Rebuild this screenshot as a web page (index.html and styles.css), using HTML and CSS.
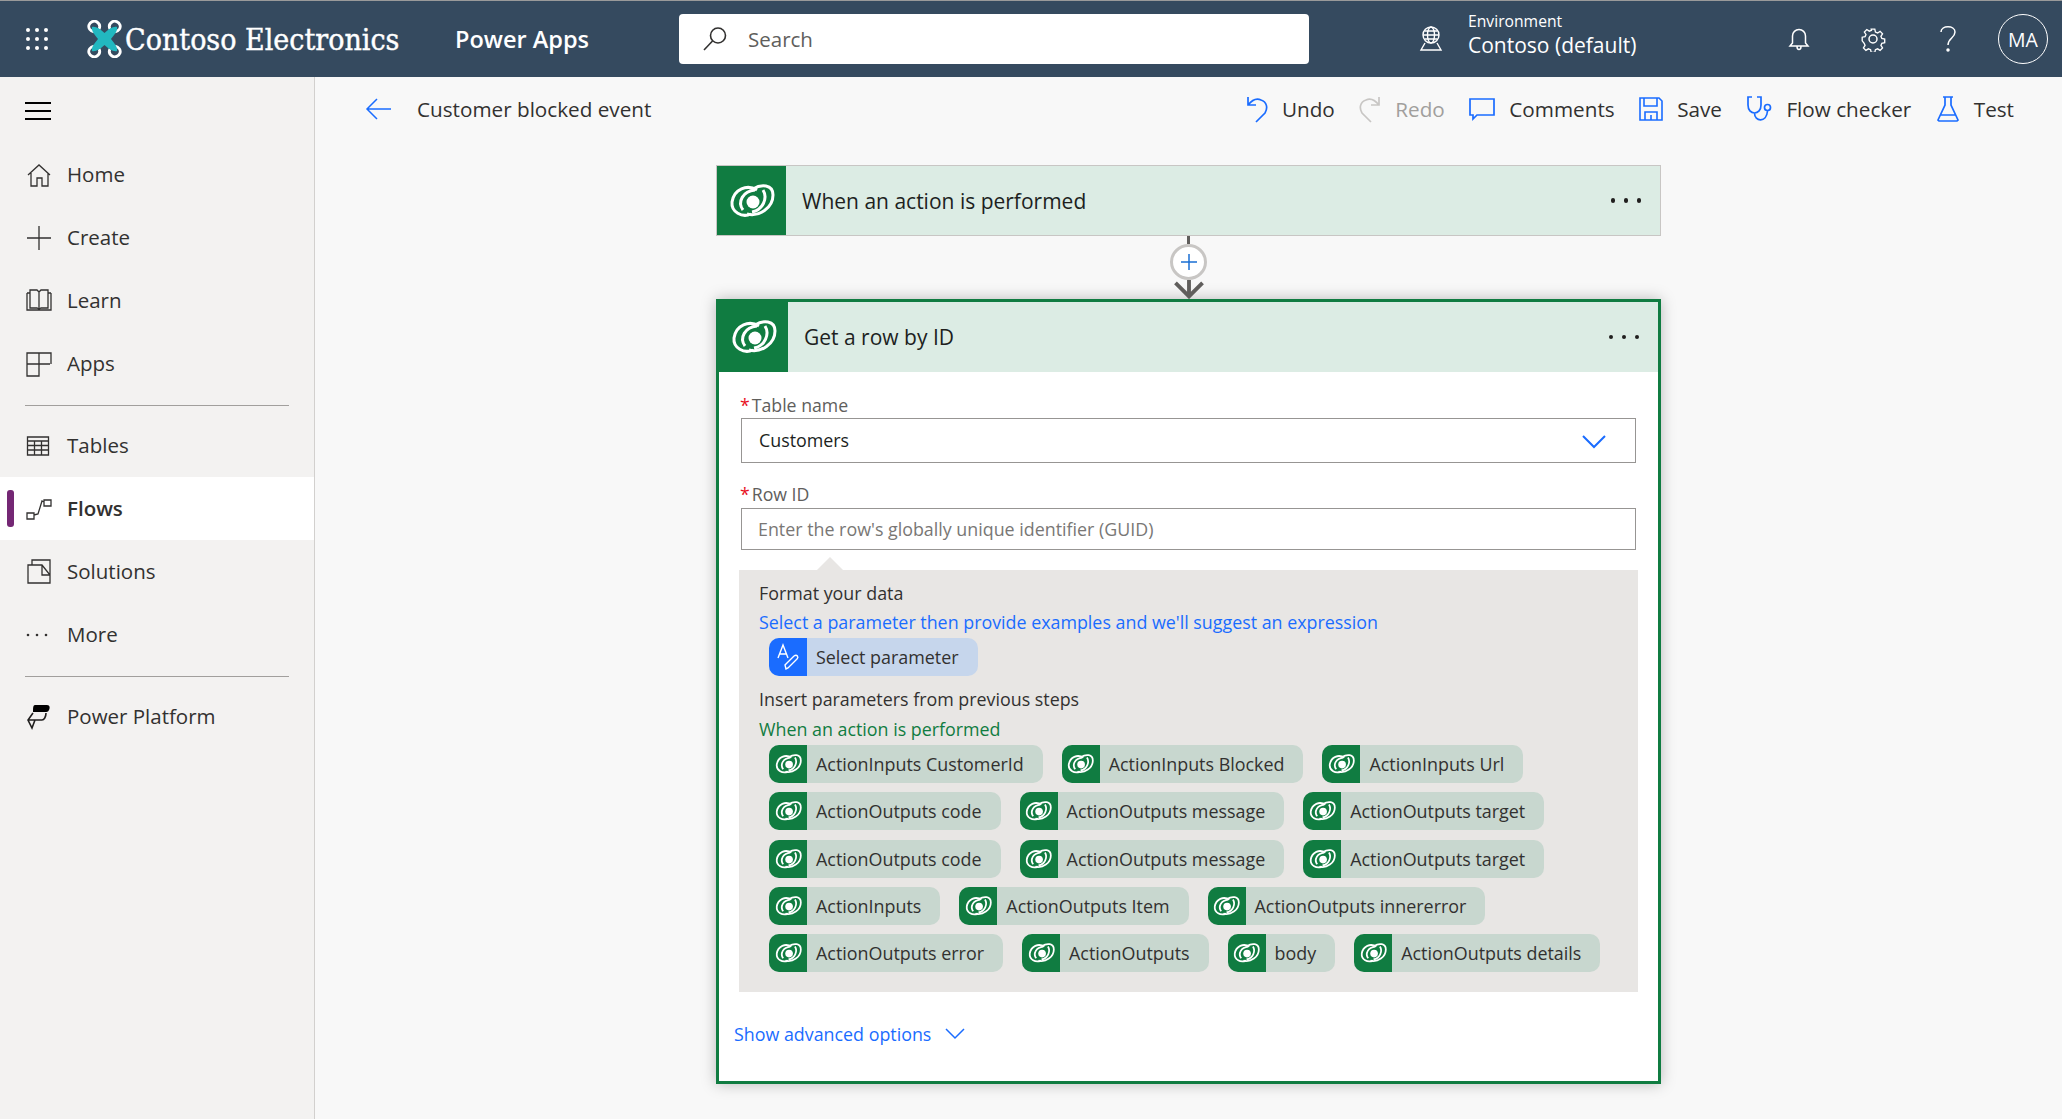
FILE: index.html
```html
<!DOCTYPE html>
<html lang="en">
<head>
<meta charset="utf-8">
<title>Customer blocked event</title>
<link rel="stylesheet" href="styles.css">
</head>
<body>
<svg class="defs" width="0" height="0" aria-hidden="true">
  <symbol id="dv" viewBox="8 12 46 36">
    <g fill="none" stroke="currentColor" stroke-width="3">
      <path d="M36 19C26 13 13 18 11 31c-1 10 10 16 19 12"/>
      <path d="M32 18c8-5 20-5 20 6 0 13-14 22-26 19"/>
      <path d="M22 39c-6-8 0-19 12-20"/>
      <path d="M42 19c5 8 0 20-11 22"/>
    </g>
    <circle cx="32" cy="31" r="6.500" fill="currentColor"/>
  </symbol>
</svg>
<header class="topbar">
  <svg class="waffle" width="24" height="24" viewBox="0 0 24 24" fill="#fff"><circle cx="3" cy="3" r="2"/><circle cx="12" cy="3" r="2"/><circle cx="21" cy="3" r="2"/><circle cx="3" cy="12" r="2"/><circle cx="12" cy="12" r="2"/><circle cx="21" cy="12" r="2"/><circle cx="3" cy="21" r="2"/><circle cx="12" cy="21" r="2"/><circle cx="21" cy="21" r="2"/></svg>
  <svg class="logo" width="35" height="38" viewBox="0 0 35 38">
    <path d="M7 12C3 11 1 8 2 5 3 2 7 0 10 2c3 2 3 5 2 7M28 12c4-1 6-4 5-7-1-3-5-5-8-3-3 2-3 5-2 7M7 26c-4 1-6 4-5 7 1 3 5 5 8 3 3-2 3-5 2-7M28 26c4 1 6 4 5 7-1 3-5 5-8 3-3-2-3-5-2-7" fill="none" stroke="#fff" stroke-width="2.800"/>
    <path d="M5 7c4-1 8 2 12.500 6C22 9 26 6 30 7c1 4-3 8-6 12 3 4 7 8 6 12-4 1-8-2-12.500-6C13 29 9 32 5 31c-1-4 3-8 6-12-3-4-7-8-6-12z" fill="#22b8c0"/>
  </svg>
  <span class="brand">Contoso Electronics</span>
  <span class="product">Power Apps</span>
  <div class="search">
    <svg width="28" height="28" viewBox="0 0 28 28" fill="none" stroke="#323130" stroke-width="1.600"><circle cx="17" cy="10.500" r="7.500"/><path d="M11.500 16L3 25"/></svg>
    <span>Search</span>
  </div>
  <div class="env">
    <svg width="28" height="28" viewBox="0 0 28 28" fill="none" stroke="#fff" stroke-width="1.400"><circle cx="14" cy="10" r="8"/><ellipse cx="14" cy="10" rx="3.500" ry="8"/><path d="M6 10h16M7.500 6h13M7.500 14h13M8 18l-4 7h20l-4-7"/></svg>
    <div class="env-text"><span class="env-label">Environment</span><span class="env-name">Contoso (default)</span></div>
  </div>
  <div class="top-icons">
    <svg width="24" height="26" viewBox="0 0 24 26" fill="none" stroke="#fff" stroke-width="1.500"><path d="M3 20h18l-2.500-3V10a6.500 6.500 0 0 0-13 0v7zM10 20.500c0 4 4 4 4 0"/></svg>
    <svg width="26" height="26" viewBox="0 0 26 26" fill="none" stroke="#fff" stroke-width="1.500"><circle cx="13" cy="13" r="4"/><path d="M11 2h4l.7 3.300 2.400 1 2.800-1.800 2.700 2.800-1.800 2.800 1 2.300 3.200.7v4l-3.200.7-1 2.400 1.800 2.800-2.700 2.700-2.800-1.800-2.400 1-.7 3.100h-4l-.7-3.100-2.400-1-2.800 1.800-2.700-2.700 1.800-2.800-1-2.400L1 15v-4l3.200-.7 1-2.300L3.400 5.300l2.700-2.800 2.800 1.800 2.400-1z" transform="translate(1.300 1.300) scale(.9)"/></svg>
    <svg class="help" width="22" height="28" viewBox="0 0 22 28" fill="none" stroke="#fff" stroke-width="1.500"><path d="M4 7c0-7 14-7 14 0 0 6-7 6-7 13"/><circle cx="11" cy="25" r="1" fill="#fff"/></svg>
    <span class="avatar">MA</span>
  </div>
</header>
<div class="main">
  <nav class="sidebar">
    <div class="menu-btn"><svg width="26" height="20" viewBox="0 0 26 20" stroke="#000" stroke-width="2"><path d="M0 2h26M0 10h26M0 18h26"/></svg></div>
    <a class="nav-item"><svg class="nav-icon" viewBox="0 0 26 26" fill="none" stroke="#323130" stroke-width="1.300"><path d="M2 13L13 3l11 10M5 11v13h6v-8h5v8h6V11"/></svg><span>Home</span></a>
    <a class="nav-item"><svg class="nav-icon" viewBox="0 0 26 26" fill="none" stroke="#323130" stroke-width="1.300"><path d="M13 1v24M1 13h24"/></svg><span>Create</span></a>
    <a class="nav-item"><svg class="nav-icon" viewBox="0 0 26 26" fill="none" stroke="#323130" stroke-width="1.300"><path d="M1 5h3M22 5h3M1 5v17h24V5M4 2h7l2 2 2-2h7v18h-7l-2 1-2-1H4zM13 4v17"/></svg><span>Learn</span></a>
    <a class="nav-item"><svg class="nav-icon" viewBox="0 0 26 26" fill="none" stroke="#323130" stroke-width="1.300"><path d="M1 2h12v23H1zM1 13h23M13 2h12v11"/></svg><span>Apps</span></a>
    <div class="nav-sep"></div>
    <a class="nav-item"><svg class="nav-icon" viewBox="0 0 26 26" fill="none" stroke="#323130" stroke-width="1.300"><path d="M1.500 4h21v18h-21zM1.500 8h21M1.500 12.500h21M1.500 17h21M8.500 8v14M15.500 8v14"/></svg><span>Tables</span></a>
    <a class="nav-item active"><svg class="nav-icon" viewBox="0 0 26 26" fill="none" stroke="#323130" stroke-width="1.300"><path d="M1 17h7v6H1zM18 4h7v6h-7zM8 19l4-1 4-13 2 1"/></svg><span>Flows</span></a>
    <a class="nav-item"><svg class="nav-icon" viewBox="0 0 26 26" fill="none" stroke="#323130" stroke-width="1.300"><path d="M2 6h14l8 10v8H2zM6 6V1h18v23M16 6v10h8"/></svg><span>Solutions</span></a>
    <a class="nav-item"><svg class="nav-icon" viewBox="0 0 26 26" fill="#323130"><circle cx="2" cy="13" r="1.300"/><circle cx="11" cy="13" r="1.300"/><circle cx="20" cy="13" r="1.300"/></svg><span>More</span></a>
    <div class="nav-sep"></div>
    <a class="nav-item"><svg class="nav-icon" viewBox="0 0 26 26"><path d="M9 1h12c3 0 3 3 2 5-1 2-2 2-4 2H7c0-4 0-7 2-7z" fill="#000"/><path d="M7 9L2 16l4 8 3-8h7c2 0 4-3 4-7M2 16h7" fill="none" stroke="#201f1e" stroke-width="1.600"/></svg><span>Power Platform</span></a>
  </nav>
  <div class="content">
    <div class="toolbar">
      <svg class="back" width="26" height="24" viewBox="0 0 26 24" fill="none" stroke="#1a6cff" stroke-width="1.500"><path d="M12 2L2 12l10 10M2 12h24"/></svg>
      <span class="flow-name">Customer blocked event</span>
      <div class="actions">
        <span class="action"><svg width="22" height="28" viewBox="0 0 22 28" fill="none" stroke="#1a6cff" stroke-width="1.700"><path d="M2 2v8h8M2 10C6 5 11 3 15 5c6 2 7 8 4 13l-9 9"/></svg>Undo</span>
        <span class="action off"><svg width="22" height="28" viewBox="0 0 22 28" fill="none" stroke="#c8c6c4" stroke-width="1.700"><path d="M20 2v8h-8M20 10C16 5 11 3 7 5 1 7 0 13 3 18l9 9"/></svg>Redo</span>
        <span class="action"><svg width="26" height="26" viewBox="0 0 26 26" fill="none" stroke="#1a6cff" stroke-width="1.700"><path d="M1 3h24v16H8l-4 4v-4H1z"/></svg>Comments</span>
        <span class="action"><svg width="24" height="26" viewBox="0 0 24 26" fill="none" stroke="#1a6cff" stroke-width="1.600"><path d="M1 2h19l3 3v19H1zM5 2v8h13V2M6 24v-8h12v8M12 19v5"/></svg>Save</span>
        <span class="action"><svg width="26" height="28" viewBox="0 0 26 28" fill="none" stroke="#1a6cff" stroke-width="1.700"><path d="M6 2H2v8c0 5 3 8 6.500 8S15 15 15 10V2h-4M8.500 18c0 9 12 10 13-2"/><circle cx="21.500" cy="12.500" r="3"/></svg>Flow checker</span>
        <span class="action"><svg width="24" height="28" viewBox="0 0 24 28" fill="none" stroke="#1a6cff" stroke-width="1.700"><path d="M7 2h10M9 2v8L2 25l1 1h18l1-1-7-15V2M5 20h14"/></svg>Test</span>
      </div>
    </div>
    <div class="canvas">
      <section class="card-head trigger">
        <div class="head-icon"><svg class="dv-lg"><use href="#dv"/></svg></div>
        <span class="head-title">When an action is performed</span>
        <span class="dots"><i></i><i></i><i></i></span>
      </section>
      <div class="connector">
        <span class="stem"></span>
        <span class="plus"><svg width="16" height="16" viewBox="0 0 16 16" stroke="#1a6fd4" stroke-width="1.500"><path d="M8 0v16M0 8h16"/></svg></span>
        <svg class="arrow" width="32" height="20" viewBox="0 0 32 20" fill="none" stroke="#605e5c" stroke-width="4"><path d="M16 0v16M2 3l14 14L30 3"/></svg>
      </div>
      <section class="card">
        <div class="card-head open">
          <div class="head-icon wide"><svg class="dv-lg"><use href="#dv"/></svg></div>
          <span class="head-title">Get a row by ID</span>
          <span class="dots"><i></i><i></i><i></i></span>
        </div>
        <div class="card-body">
          <label class="field-label first"><b>*</b>Table name</label>
          <div class="select"><span>Customers</span><svg width="26" height="16" viewBox="0 0 26 16" fill="none" stroke="#1a6cff" stroke-width="2"><path d="M2 2l11 11L24 2"/></svg></div>
          <label class="field-label second"><b>*</b>Row ID</label>
          <div class="input">Enter the row's globally unique identifier (GUID)</div>
          <div class="panel">
            <p class="p-head">Format your data</p>
            <p class="p-link">Select a parameter then provide examples and we'll suggest an expression</p>
            <div class="chip blue">
              <span class="chip-icon"><svg width="26" height="28" viewBox="0 0 26 28" fill="none" stroke="#fff" stroke-width="1.400"><path d="M3 15L8 2l5 13M5 11h6M11 26l-1-4 9-9c3-2 5 1 3 3l-9 9z"/></svg></span>
              <span class="chip-text">Select parameter</span>
            </div>
            <p class="p-head insert">Insert parameters from previous steps</p>
            <p class="p-green">When an action is performed</p>
            <div class="chips">
              <div class="chip"><span class="chip-icon"><svg class="dv-sm"><use href="#dv"/></svg></span><span class="chip-text">ActionInputs CustomerId</span></div>
              <div class="chip"><span class="chip-icon"><svg class="dv-sm"><use href="#dv"/></svg></span><span class="chip-text">ActionInputs Blocked</span></div>
              <div class="chip"><span class="chip-icon"><svg class="dv-sm"><use href="#dv"/></svg></span><span class="chip-text">ActionInputs Url</span></div>
            </div>
            <div class="chips">
              <div class="chip"><span class="chip-icon"><svg class="dv-sm"><use href="#dv"/></svg></span><span class="chip-text">ActionOutputs code</span></div>
              <div class="chip"><span class="chip-icon"><svg class="dv-sm"><use href="#dv"/></svg></span><span class="chip-text">ActionOutputs message</span></div>
              <div class="chip"><span class="chip-icon"><svg class="dv-sm"><use href="#dv"/></svg></span><span class="chip-text">ActionOutputs target</span></div>
            </div>
            <div class="chips">
              <div class="chip"><span class="chip-icon"><svg class="dv-sm"><use href="#dv"/></svg></span><span class="chip-text">ActionOutputs code</span></div>
              <div class="chip"><span class="chip-icon"><svg class="dv-sm"><use href="#dv"/></svg></span><span class="chip-text">ActionOutputs message</span></div>
              <div class="chip"><span class="chip-icon"><svg class="dv-sm"><use href="#dv"/></svg></span><span class="chip-text">ActionOutputs target</span></div>
            </div>
            <div class="chips">
              <div class="chip"><span class="chip-icon"><svg class="dv-sm"><use href="#dv"/></svg></span><span class="chip-text">ActionInputs</span></div>
              <div class="chip"><span class="chip-icon"><svg class="dv-sm"><use href="#dv"/></svg></span><span class="chip-text">ActionOutputs Item</span></div>
              <div class="chip"><span class="chip-icon"><svg class="dv-sm"><use href="#dv"/></svg></span><span class="chip-text">ActionOutputs innererror</span></div>
            </div>
            <div class="chips">
              <div class="chip"><span class="chip-icon"><svg class="dv-sm"><use href="#dv"/></svg></span><span class="chip-text">ActionOutputs error</span></div>
              <div class="chip"><span class="chip-icon"><svg class="dv-sm"><use href="#dv"/></svg></span><span class="chip-text">ActionOutputs</span></div>
              <div class="chip"><span class="chip-icon"><svg class="dv-sm"><use href="#dv"/></svg></span><span class="chip-text">body</span></div>
              <div class="chip"><span class="chip-icon"><svg class="dv-sm"><use href="#dv"/></svg></span><span class="chip-text">ActionOutputs details</span></div>
            </div>
          </div>
          <div class="advanced"><span>Show advanced options</span><svg width="20" height="12" viewBox="0 0 20 12" fill="none" stroke="#1a6cff" stroke-width="1.500"><path d="M1 1l9 9 9-9"/></svg></div>
        </div>
      </section>
    </div>
  </div>
</div>
</body>
</html>
```
FILE: styles.css
```css
* { box-sizing: border-box; }
html, body { margin: 0; height: 100%; overflow: hidden; }
body { font-family: "Open Sans", "Noto Sans", sans-serif; color: #323130; background: #f8f8f8; display: flex; flex-direction: column; }
.defs { display: block; height: 0; }
p { margin: 0; }

.topbar { height: 77px; flex: none; background: #354a5f; border-top: 1px solid #9a9a9a; color: #fff; display: flex; align-items: center; }
.waffle { margin-left: 25px; }
.logo { margin-left: 38px; }
.brand { font-family: "DejaVu Serif", serif; font-stretch: condensed; font-size: 30px; margin-left: 3px; width: 330px; letter-spacing: 0; -webkit-text-stroke: .4px #fff; white-space: nowrap; }
.product { font-size: 23.5px; font-weight: 600; width: 224px; letter-spacing: 0; }
.search { width: 630px; height: 50px; background: #fff; border-radius: 4px; display: flex; align-items: center; gap: 19px; padding-left: 22px; color: #605e5c; font-size: 20.5px; }
.env { margin-left: 108px; display: flex; align-items: center; gap: 23px; }
.env-text { display: flex; flex-direction: column; padding-bottom: 8px; }
.env-label { font-size: 15.7px; line-height: 20px; }
.env-name { font-size: 21px; line-height: 28px; }
.top-icons { margin-left: auto; margin-right: 14px; display: flex; align-items: center; gap: 49px; }
.help { position: relative; left: 2px; }
.avatar { width: 50px; height: 50px; margin-left: -8px; border: 1px solid #fff; border-radius: 50%; display: flex; align-items: center; justify-content: center; font-size: 19.5px; }

.main { flex: 1; display: flex; min-height: 0; }
.sidebar { width: 315px; flex: none; background: #f3f2f1; border-right: 1px solid #d2d0ce; }
.menu-btn { height: 66px; padding: 24px 0 0 25px; }
.nav-item { height: 63px; display: flex; align-items: center; padding-left: 26px; font-size: 20.5px; color: #323130; position: relative; gap: 15px; }
.nav-item span { padding-bottom: 1px; }
.nav-icon { width: 26px; height: 26px; flex: none; }
.nav-item.active { background: #fff; font-weight: 600; }
.nav-item.active::before { content: ""; position: absolute; left: 7px; top: 13px; width: 7px; height: 37px; border-radius: 3px; background: #742774; }
.nav-sep { height: 1px; margin: 10px 25px 8px; background: #a19f9d; }

.content { flex: 1; min-width: 0; display: flex; flex-direction: column; }
.toolbar { height: 63px; flex: none; display: flex; align-items: center; background: #f8f8f8; padding: 0 48px 0 50px; font-size: 20.7px; }
.flow-name { margin-left: 26px; }
.actions { margin-left: auto; display: flex; align-items: center; gap: 24.500px; }
.action { display: flex; align-items: center; gap: 14px; }
.action.off { color: #a19f9d; }

.canvas { flex: 1; padding-top: 25px; padding-left: 401px; }
.card-head { display: flex; align-items: center; background: #dcece4; }
.trigger { width: 945px; height: 71px; border: 1px solid #c8c6c4; }
.head-icon { width: 69px; height: 100%; background: #107c41; color: #fff; display: flex; align-items: center; justify-content: center; flex: none; }
.dv-lg { width: 46px; height: 36px; }
.dv-sm { width: 27px; height: 22px; }
.head-title { font-size: 21px; color: #201f1e; margin-left: 16px; }
.dots { margin-left: auto; margin-right: 19px; display: flex; gap: 8.500px; }
.dots i { width: 4.500px; height: 4.500px; border-radius: 50%; background: #201f1e; }

.connector { width: 945px; height: 63px; position: relative; display: flex; flex-direction: column; align-items: center; }
.stem { width: 3px; height: 8px; background: #605e5c; }
.plus { width: 37px; height: 37px; border: 3px solid #c8c6c4; border-radius: 50%; background: #fff; display: flex; align-items: center; justify-content: center; }

.card { width: 945px; height: 785px; border: 3px solid #107c41; background: #fff; box-shadow: 0 0 14px rgba(0,0,0,.25); }
.open { height: 70px; }
.card-body { padding: 0 22px 0 0; }
.field-label { display: block; font-size: 17.7px; color: #605e5c; margin-left: 21px; line-height: 24px; }
.field-label b { color: #e81123; font-weight: 400; margin-right: 2px; }
.field-label.first { padding-top: 21px; height: 46px; }
.field-label.second { margin-top: 19px; height: 26px; }
.select { margin-left: 22px; height: 45px; border: 1px solid #979593; display: flex; align-items: center; justify-content: space-between; padding: 0 28px 2px 17px; font-size: 17.85px; color: #201f1e; }
.select svg { margin-top: 5px; }
.input { margin-left: 22px; height: 42px; border: 1px solid #979593; display: flex; align-items: center; padding: 0 0 1px 16px; font-size: 17.85px; color: #797775; }
.panel { margin: 20px -2px 0 20px; height: 422px; background: #e8e6e4; position: relative; padding: 10px 0 0 20px; font-size: 17.85px; }
.panel::before { content: ""; position: absolute; left: 78px; top: -13px; border: 13px solid transparent; border-top: 0; border-bottom-color: #e8e6e4; }
.p-head { line-height: 26px; height: 26px; }
.p-link { color: #1a6cff; line-height: 26px; height: 29px; margin-top: 3px; }
.insert { margin-top: 10px; }
.p-green { color: #107c41; line-height: 26px; height: 29px; margin-top: 4px; }
.chip { height: 38px; border-radius: 10px; display: inline-flex; background: #c8d7cf; overflow: hidden; }
.chip.blue { background: #c6d6ec; margin-left: 10px; }
.chip-icon { width: 38px; background: #107c41; color: #fff; display: flex; align-items: center; justify-content: center; flex: none; }
.chip.blue .chip-icon { background: #1a6cff; }
.chip-text { padding: 0 19px 0 9px; line-height: 38px; font-size: 17.9px; white-space: nowrap; }
.chips { display: flex; gap: 19px; margin-left: 10px; margin-bottom: 9.300px; }
.advanced { margin: 30px 0 0 15px; display: flex; align-items: center; gap: 14px; font-size: 17.85px; color: #1a6cff; }
```
